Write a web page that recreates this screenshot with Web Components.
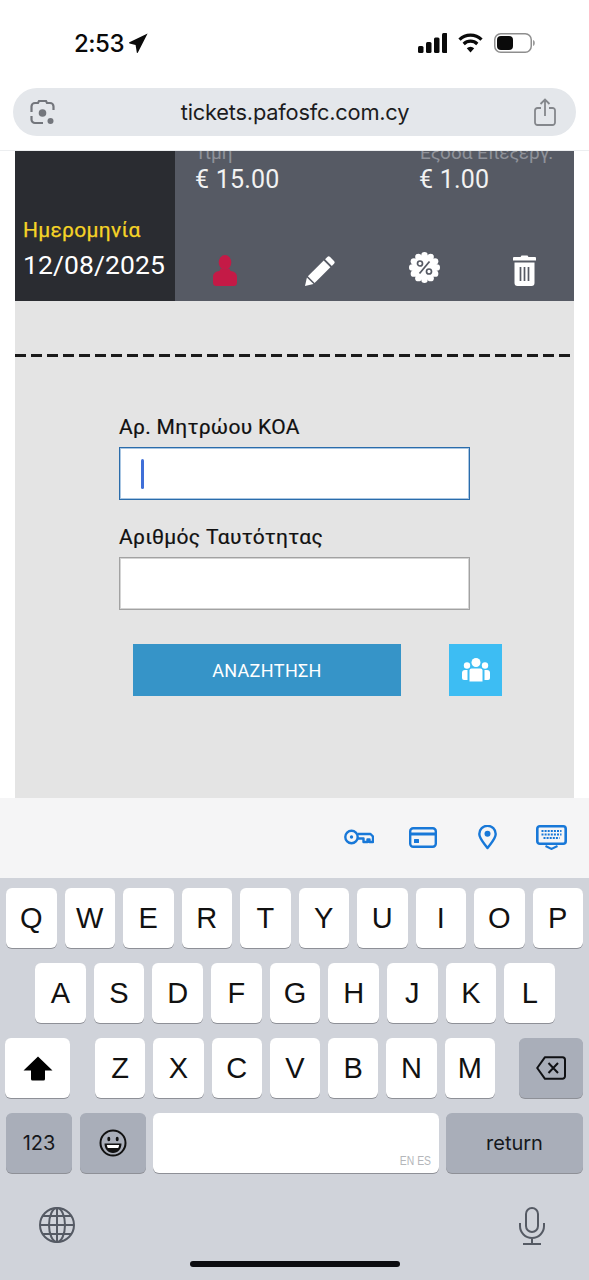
<!DOCTYPE html>
<html lang="el">
<head>
<meta charset="utf-8">
<title>tickets.pafosfc.com.cy</title>
<style>
  html, body { margin: 0; padding: 0; background: #fff; }
  body { width: 589px; height: 1280px; overflow: hidden; font-family: Roboto, "Liberation Sans", sans-serif; }
</style>
</head>
<body>
<ios-status></ios-status>
<url-bar>tickets.pafosfc.com.cy</url-bar>
<page-view>
  <ticket-row price="€ 15.00" fee="€ 1.00" date="12/08/2025"></ticket-row>
  <search-form>
    <form-field label="Αρ. Μητρώου ΚΟΑ" focused></form-field>
    <form-field label="Αριθμός Ταυτότητας"></form-field>
  </search-form>
</page-view>
<kb-accessory></kb-accessory>
<ios-keyboard></ios-keyboard>

<script>
// Top of the phone: clock on the left, signal / wifi / battery on the right
class IosStatus extends HTMLElement {
  constructor() {
    super();
    this.attachShadow({ mode: 'open' });
    this.shadowRoot.innerHTML = `
      <style>
        :host { display: flex; height: 88px; box-sizing: border-box; padding: 32px 54px 0 74px; justify-content: space-between; align-items: flex-start; }
        .left { display: flex; align-items: center; gap: 5px; height: 22px; font: 500 24px Inter, "Liberation Sans", sans-serif; color: #0a0a0a; letter-spacing: -.5px; }
        .right { display: flex; align-items: center; gap: 11px; height: 22px; }
        svg { display: block; }
      </style>
      <div class="left">
        <span>2:53</span>
        <svg width="19" height="20" viewBox="0 0 19 20"><path d="M18.6.6 8.9 19.6c-.3.5-1 .4-1.1-.2L6.6 12 .5 10.400c-.6-.2-.6-1-.1-1.200z" fill="#0a0a0a"/></svg>
      </div>
      <div class="right">
        <svg width="29" height="20" viewBox="0 0 29 20" fill="#0a0a0a">
          <rect x="0" y="13" width="5.500" height="7" rx="1.500"/><rect x="8" y="9" width="5.500" height="11" rx="1.500"/><rect x="16" y="4.500" width="5.500" height="15.500" rx="1.500"/><rect x="24" y="0" width="5.500" height="20" rx="1.500"/>
        </svg>
        <svg width="25" height="20" viewBox="0 0 25 20" fill="none" stroke="#0a0a0a" stroke-width="3.200">
          <path d="M1.500 6.600a15.700 15.700 0 0 1 22 0"/><path d="M5.700 11a9.700 9.700 0 0 1 13.600 0"/><path d="M12.500 19.500 8.800 15.200a5.200 5.200 0 0 1 7.400 0z" fill="#0a0a0a" stroke="none"/>
        </svg>
        <svg width="41" height="20" viewBox="0 0 41 20">
          <rect x=".75" y=".75" width="36.500" height="18.500" rx="6" fill="none" stroke="#8e8e8e" stroke-width="1.500"/>
          <rect x="3" y="3" width="16" height="14" rx="4" fill="#0a0a0a"/>
          <path d="M39 7c1.200.4 1.800 1.500 1.800 3s-.6 2.600-1.800 3z" fill="#9a9a9a"/>
        </svg>
      </div>`;
  }
}

class UrlBar extends HTMLElement {
  constructor() {
    super();
    this.attachShadow({ mode: 'open' });
    this.shadowRoot.innerHTML = `
      <style>
        :host { display: flex; align-items: center; justify-content: space-between; height: 48px; margin: 0 13px 14px; padding: 0 20px 0 17px; border-radius: 24px; background: #e4e7eb; }
        .url { font: 400 21.800px Inter, "Liberation Sans", sans-serif; color: #1c1c1e; letter-spacing: -.2px; margin-bottom: 1px; }
        svg { display: block; }
      </style>
      <svg width="26" height="26" viewBox="0 0 26 26" fill="none" stroke="#73767c" stroke-width="2.200">
        <path d="M1.500 13V7.500a3.500 3.500 0 0 1 3.500-3.500h3l1-2h7l1 2h3a3.500 3.500 0 0 1 3.500 3.500V11"/>
        <path d="M1.500 17v3.500A3.500 3.500 0 0 0 5 24h8"/>
        <circle cx="12.500" cy="14" r="3.800" fill="#73767c" stroke="none"/>
        <circle cx="20.500" cy="22" r="3" fill="#73767c" stroke="none"/>
      </svg>
      <span class="url"><slot></slot></span>
      <svg width="22" height="28" viewBox="0 0 22 28" fill="none" stroke="#84878c" stroke-width="1.800">
        <path d="M7 10H3.500A2.500 2.500 0 0 0 1 12.500v12A2.500 2.500 0 0 0 3.500 27h15a2.500 2.500 0 0 0 2.500-2.500v-12a2.500 2.500 0 0 0-2.500-2.500H15"/>
        <path d="M11 18V1.500M6.500 6 11 1.500 15.500 6"/>
      </svg>`;
  }
}

// White page area holding the grey card, cut off by the keyboard
class PageView extends HTMLElement {
  constructor() {
    super();
    this.attachShadow({ mode: 'open' });
    this.shadowRoot.innerHTML = `
      <style>
        :host { display: block; height: 648px; overflow: hidden; padding: 0 15px; background: #fff; border-top: 1px solid #eceef0; box-sizing: border-box; }
        .card { height: 100%; background: #e4e4e4; }
      </style>
      <div class="card"><slot></slot></div>`;
  }
}

class TicketRow extends HTMLElement {
  constructor() {
    super();
    this.attachShadow({ mode: 'open' });
  }
  connectedCallback() {
    // the 12 bumps of the discount badge
    let bumps = '';
    for (let i = 0; i < 12; i++) {
      const a = i * Math.PI / 6;
      bumps += `<circle cx="${(15.5 + 12.3 * Math.cos(a)).toFixed(2)}" cy="${(15.5 + 12.3 * Math.sin(a)).toFixed(2)}" r="3.200"/>`;
    }
    this.shadowRoot.innerHTML = `
      <style>
        :host { display: flex; height: 150px; overflow: hidden; }
        .date { width: 160px; flex: none; box-sizing: border-box; background: #2a2c31; display: flex; flex-direction: column; justify-content: flex-end; padding: 0 0 19px 8px; }
        .date b { font: 400 21px/24px Roboto, sans-serif; color: #f5d327; margin-bottom: 6px; letter-spacing: .3px; -webkit-text-stroke: .25px #f5d327; }
        .date span { font: 400 26.500px/34px Roboto, sans-serif; color: #fff; letter-spacing: .1px; white-space: nowrap; }
        .info { flex: 1; background: #565a64; display: flex; flex-direction: column; justify-content: space-between; }
        .prices { display: grid; grid-template-columns: 224px 1fr; padding-left: 20px; margin-top: -11px; }
        .prices small { display: block; font: 400 19px/25px Roboto, sans-serif; color: #8f929a; white-space: nowrap; }
        .prices strong { display: block; font: 400 25px/30px Roboto, sans-serif; color: #f2f2f2; letter-spacing: .2px; }
        .actions { display: grid; grid-template-columns: repeat(4, 1fr); justify-items: center; align-items: end; padding-bottom: 15px; }
        svg { display: block; }
        .pen { margin-right: 10px; }
        .badge { margin-bottom: 3px; }
      </style>
      <div class="date"><b>Ημερομηνία</b><span>${this.getAttribute('date')}</span></div>
      <div class="info">
        <div class="prices">
          <div><small>Τιμή</small><strong>${this.getAttribute('price')}</strong></div>
          <div><small>Έξοδα Επεξεργ.</small><strong>${this.getAttribute('fee')}</strong></div>
        </div>
        <div class="actions">
          <svg width="24" height="31" viewBox="0 0 24 31" fill="#c41a46"><ellipse cx="12" cy="7.500" rx="6.300" ry="7.500"/><path d="M7.500 13.500c2.500 1.500 6.500 1.500 9 0l1 2.500c3.500.5 6.500 2 6.500 6v5.500a3.500 3.500 0 0 1-3.500 3.500h-17A3.500 3.500 0 0 1 0 27.500V22c0-4 3-5.500 6.500-6z"/></svg>
          <svg class="pen" width="30" height="30" viewBox="0 0 30 30" fill="#fff"><path d="M22.300 1a2 2 0 0 1 2.800 0l3.900 3.900a2 2 0 0 1 0 2.800l-2.200 2.200-6.700-6.700z"/><path d="M18.700 4.600l6.700 6.700L9.600 27l-6.700-6.700z"/><path d="M1.900 21.500l6.600 6.600L0 30z"/></svg>
          <svg class="badge" width="31" height="31" viewBox="0 0 31 31"><g fill="#fff"><circle cx="15.500" cy="15.500" r="12.500"/>${bumps}</g><path d="M20.500 9.500 10.500 21.500" stroke="#565a64" stroke-width="1.800"/><circle cx="11" cy="11.500" r="2.500" fill="none" stroke="#565a64" stroke-width="1.700"/><circle cx="20" cy="19.500" r="2.500" fill="none" stroke="#565a64" stroke-width="1.700"/></svg>
          <svg width="23" height="31" viewBox="0 0 23 31"><path d="M7.500 2 8.500.5h6l1 1.500H22a1 1 0 0 1 1 1V5.500H0V3a1 1 0 0 1 1-1z" fill="#fff"/><path d="M1.500 7.500h20V28a3 3 0 0 1-3 3h-14a3 3 0 0 1-3-3z" fill="#fff"/><path d="M7.500 12v14M11.500 12v14M15.500 12v14" stroke="#565a64" stroke-width="1.700"/></svg>
        </div>
      </div>`;
  }
}

class SearchForm extends HTMLElement {
  constructor() {
    super();
    this.attachShadow({ mode: 'open' });
    this.shadowRoot.innerHTML = `
      <style>
        :host { display: block; }
        .dash { height: 3px; margin-top: 53px; background: repeating-linear-gradient(90deg, #1a1a1a 0 11px, transparent 11px 16px); }
        .fields { display: flex; flex-direction: column; gap: 25px; padding: 58px 0 0 104px; }
        .actions { display: flex; gap: 48px; padding: 34px 0 0 118px; }
        button { height: 52px; border: 0; padding: 0; color: #fff; display: flex; align-items: center; justify-content: center; }
        .go { width: 268px; background: #3694c8; font: 400 18px Roboto, sans-serif; letter-spacing: .3px; }
        .group { width: 53px; background: #3dbdf3; }
      </style>
      <div class="dash"></div>
      <div class="fields"><slot></slot></div>
      <div class="actions">
        <button class="go">ΑΝΑΖΗΤΗΣΗ</button>
        <button class="group" aria-label="group">
          <svg width="28" height="24" viewBox="0 0 28 24" fill="#fff">
            <circle cx="14" cy="4.500" r="4.500"/><circle cx="5" cy="7.500" r="3.200"/><circle cx="23" cy="7.500" r="3.200"/>
            <path d="M9.500 10.500h9a2 2 0 0 1 2 2V23.500h-13V12.500a2 2 0 0 1 2-2z"/>
            <path d="M5.500 12H3a3 3 0 0 0-3 3v5a2 2 0 0 0 2 2h3.500z"/><path d="M22.500 12H25a3 3 0 0 1 3 3v5a2 2 0 0 1-2 2h-3.500z"/>
          </svg>
        </button>
      </div>`;
  }
}

class FormField extends HTMLElement {
  constructor() {
    super();
    this.attachShadow({ mode: 'open' });
  }
  connectedCallback() {
    const focused = this.hasAttribute('focused');
    this.shadowRoot.innerHTML = `
      <style>
        :host { display: block; width: 351px; }
        label { display: block; font: 400 21px/24px Roboto, sans-serif; color: #111; margin-bottom: 8px; letter-spacing: .3px; -webkit-text-stroke: .2px #111; }
        .box { height: 53px; box-sizing: border-box; background: #fff; border: 1px solid #a2a2a2; box-shadow: inset 0 0 0 1px #d4d4d4; display: flex; align-items: center; padding-left: 21px; }
        .box.on { border-color: #2a6cab; box-shadow: inset 0 0 0 1px #a9c6e2; }
        i { width: 3px; height: 30px; border-radius: 2px; background: #3f6fd8; }
      </style>
      <label>${this.getAttribute('label')}</label>
      <div class="box ${focused ? 'on' : ''}">${focused ? '<i></i>' : ''}</div>`;
  }
}

class KbAccessory extends HTMLElement {
  constructor() {
    super();
    this.attachShadow({ mode: 'open' });
    this.shadowRoot.innerHTML = `
      <style>
        :host { display: flex; height: 80px; box-sizing: border-box; background: #f5f5f6; justify-content: flex-end; align-items: center; padding: 0 6px 2px 0; }
        span { width: 64px; display: flex; justify-content: center; }
        svg { display: block; }
      </style>
      <span><svg width="30" height="16" viewBox="0 0 30 16" fill="none" stroke="#1878d8" stroke-width="2.400"><circle cx="7.500" cy="8" r="6.200"/><circle cx="7.500" cy="8" r="1.700" fill="#1878d8" stroke="none"/><path d="M13.500 5H26.500L29 7.500V13h-3.500v-2.500h-2V13h-4V9.500h-6" stroke-linejoin="round"/></svg></span>
      <span><svg width="28" height="21" viewBox="0 0 28 21" fill="none" stroke="#1878d8" stroke-width="2.400"><rect x="1.200" y="1.200" width="25.600" height="18.600" rx="3"/><path d="M1 7h26" stroke-width="3"/><rect x="5" y="12" width="5" height="4" rx=".5" fill="#1878d8" stroke="none"/></svg></span>
      <span><svg width="19" height="25" viewBox="0 0 19 25" fill="none" stroke="#1878d8" stroke-width="2.400"><path d="M9.500 23C5.500 17.500 1.300 13.500 1.300 9a8.200 8.200 0 0 1 16.400 0c0 4.500-4.200 8.500-8.200 14z" stroke-linejoin="round"/><circle cx="9.500" cy="8.800" r="3" fill="#1878d8" stroke="none"/></svg></span>
      <span><svg width="31" height="25" viewBox="0 0 31 25" fill="none" stroke="#1878d8" stroke-width="2.600">
        <rect x="1.300" y="1.300" width="28.400" height="17.400" rx="2.500"/>
        <path d="M5.500 6h20M5.500 9.500h20M7.500 13h16" stroke-width="2.200" stroke-dasharray="2 1.100"/>
        <path d="M9.500 21l6 3 6-3" stroke-width="2"/>
      </svg></span>`;
  }
}

class IosKey extends HTMLElement {
  constructor() {
    super();
    this.attachShadow({ mode: 'open' });
    this.shadowRoot.innerHTML = `
      <style>
        :host { display: flex; flex: 1 1 0; min-width: 0; height: 60px; box-sizing: border-box; align-items: center; justify-content: center; background: #fff; border-radius: 6px; box-shadow: 0 1px 0 #8e9097; font: 400 29px "Liberation Sans", Inter, sans-serif; color: #111; }
        :host([dark]) { background: #a9aeb9; }
        :host([small]) { font: 400 20px Inter, "Liberation Sans", sans-serif; color: #16181c; }
      </style>
      <slot></slot>`;
  }
}

class IosKeyboard extends HTMLElement {
  constructor() {
    super();
    this.attachShadow({ mode: 'open' });
    const keys = s => [...s].map(c => `<ios-key>${c}</ios-key>`).join('');
    this.shadowRoot.innerHTML = `
      <style>
        :host { display: block; height: 402px; box-sizing: border-box; padding-top: 10px; background: #d0d3da; }
        .row { display: flex; gap: 8px; margin-bottom: 15px; }
        .r1 { padding: 0 6px; }
        .r2 { padding: 0 34px 0 35px; }
        .r3 { padding: 0 6px 0 5px; gap: 8px; }
        .r4 { padding: 0 6px; margin-bottom: 0; gap: 7.500px; }
        .shift { flex: 0 0 65px; margin-right: 17px; }
        .del { flex: 0 0 64px; margin-left: 16px; }
        .n { flex: 0 0 66px; }
        .ret { flex: 0 0 137px; }
        .space { flex: 1; align-items: flex-end; justify-content: flex-end; padding: 0 7px 5px 0; box-sizing: border-box; font: 400 13px "Liberation Sans", sans-serif; color: #b4b6ba; }
        .space span { display: block; transform: scaleX(.8); transform-origin: right; white-space: nowrap; }
        .bottom { display: flex; justify-content: space-between; padding: 34px 44px 0 39px; }
        .home { width: 210px; height: 6px; margin: 16px auto 0; border-radius: 3px; background: #0c0c10; }
        svg { display: block; }
      </style>
      <div class="row r1">${keys('QWERTYUIOP')}</div>
      <div class="row r2">${keys('ASDFGHJKL')}</div>
      <div class="row r3">
        <ios-key class="shift"><svg width="30" height="25" viewBox="0 0 30 25"><path d="M15 .5 29.500 14.500H22V23a1.500 1.500 0 0 1-1.500 1.500h-11A1.500 1.500 0 0 1 8 23v-8.500H.5z" fill="#000"/></svg></ios-key>
        ${keys('ZXCVBNM')}
        <ios-key class="del" dark><svg width="30" height="24" viewBox="0 0 30 24" fill="none" stroke="#101114" stroke-width="2"><path d="M9 1.200h17.500a2.500 2.500 0 0 1 2.500 2.500v16.600a2.500 2.500 0 0 1-2.500 2.500H9L1.200 12z" stroke-linejoin="round"/><path d="m12.500 7 9.500 10M22 7l-9.500 10"/></svg></ios-key>
      </div>
      <div class="row r4">
        <ios-key class="n" dark small>123</ios-key>
        <ios-key class="n" dark><svg width="28" height="28" viewBox="0 0 28 28"><circle cx="14" cy="14" r="12.500" fill="none" stroke="#111" stroke-width="2"/><ellipse cx="9.800" cy="10" rx="1.500" ry="2.200" fill="#111"/><ellipse cx="18.200" cy="10" rx="1.500" ry="2.200" fill="#111"/><path d="M5.500 14.500h17C22.500 20 19 24 14 24S5.500 20 5.500 14.500z" fill="#111"/><path d="M7.800 16h12.400c-.2 1.200-.5 2-1 3H8.800c-.5-1-.8-1.800-1-3z" fill="#fff"/></svg></ios-key>
        <ios-key class="space"><span>EN ES</span></ios-key>
        <ios-key class="ret" dark small>return</ios-key>
      </div>
      <div class="bottom">
        <svg width="36" height="36" viewBox="0 0 36 36" fill="none" stroke="#555a64" stroke-width="2"><circle cx="18" cy="18" r="17"/><ellipse cx="18" cy="18" rx="8" ry="17"/><path d="M18 1v34M1 18h34M4 9h28M4 27h28"/></svg>
        <svg width="26" height="38" viewBox="0 0 26 38" fill="none" stroke="#555a64" stroke-width="2"><rect x="7" y="1" width="12" height="24" rx="6"/><path d="M1 16v3a12 12 0 0 0 24 0v-3M13 31v6M4 37h18"/></svg>
      </div>
      <div class="home"></div>`;
  }
}

customElements.define('ios-status', IosStatus);
customElements.define('url-bar', UrlBar);
customElements.define('page-view', PageView);
customElements.define('ticket-row', TicketRow);
customElements.define('search-form', SearchForm);
customElements.define('form-field', FormField);
customElements.define('kb-accessory', KbAccessory);
customElements.define('ios-key', IosKey);
customElements.define('ios-keyboard', IosKeyboard);
</script>
</body>
</html>
